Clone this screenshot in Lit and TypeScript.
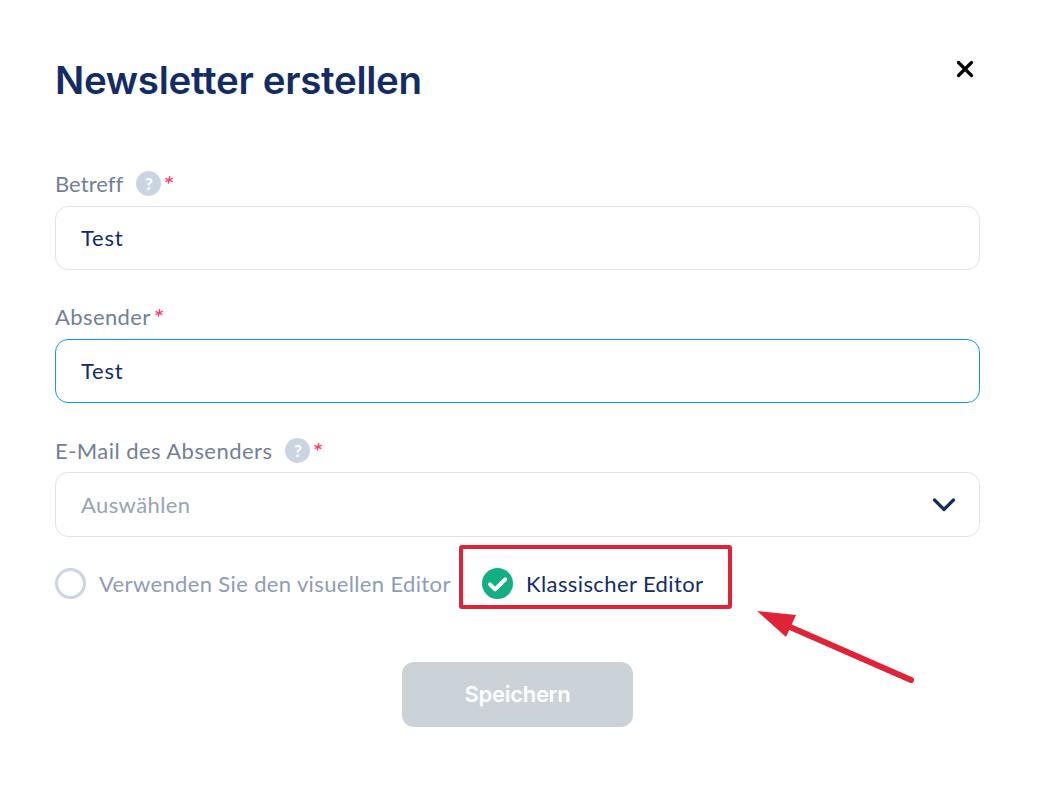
import { LitElement, html, css, nothing } from 'lit';
import { customElement, property, state } from 'lit/decorators.js';
import { classMap } from 'lit/directives/class-map.js';

@customElement('app-field-label')
export class FieldLabel extends LitElement {
  @property({ type: String }) text = '';
  @property({ type: Boolean }) help = false;

  static styles = css`
    :host {
      display: flex;
      height: 26px;
      color: #718096;
      font-size: 22px;
      line-height: 26px;
      letter-spacing: 0.4px;
    }

    .help {
      width: 25px;
      height: 25px;
      margin-left: 13px;
      border-radius: 50%;
      background: #cbd5e1;
      color: #fff;
      font-size: 17px;
      font-weight: 900;
      line-height: 25px;
      letter-spacing: 0;
      text-align: center;
    }

    .required {
      width: 8px;
      height: 8px;
      margin: 5px 0 0 4px;
      fill: none;
      stroke: #ff4069;
      stroke-width: 1.4;
    }
  `;

  render() {
    return html`
      <span>${this.text}</span>
      ${this.help ? html`<span class="help">?</span>` : nothing}
      <svg class="required" viewBox="0 0 8 8">
        <path d="M4.7 0.2L3.3 7.6M0.4 2.4L7.5 5.6M7.7 2.1L0.6 5.7" />
      </svg>
    `;
  }
}

@customElement('app-root')
export class NewsletterDialog extends LitElement {
  @state() private editor = 'classic';

  static styles = css`
    :host {
      display: block;
      box-sizing: border-box;
      height: 789px;
      padding: 55px 57px 0 55px;
      overflow: hidden;
      background: #fff;
      color: #132c66;
      font-family: Lato, sans-serif;
      font-size: 22px;
    }

    .header {
      display: flex;
      justify-content: space-between;
      height: 116px;
    }

    .title {
      margin: 0;
      font-family: Inter, sans-serif;
      font-size: 38.5px;
      font-weight: 600;
      line-height: 50px;
      letter-spacing: -0.3px;
      white-space: nowrap;
    }

    .close {
      width: 18px;
      height: 18px;
      margin: 4.5px 6px 0 0;
      fill: none;
      stroke: #000;
      stroke-width: 3.2;
      stroke-linecap: round;
    }

    .field {
      box-sizing: border-box;
      height: 133px;
    }

    .field.subject app-field-label {
      letter-spacing: 0.05px;
    }

    .field.email {
      padding-top: 1px;
    }

    .field.email app-field-label {
      letter-spacing: 0.45px;
    }

    .control {
      display: flex;
      box-sizing: border-box;
      align-items: center;
      justify-content: space-between;
      height: 64px;
      margin-top: 9px;
      padding: 0 24px 2px 25px;
      border: 1px solid #e2e3e5;
      border-radius: 13px;
      letter-spacing: 0.8px;
    }

    .control.focused {
      border-color: #0c9ced;
    }

    .control.select {
      height: 65px;
      margin-top: 8px;
      padding: 0 23px 0 25px;
      color: #97a3b4;
      letter-spacing: 0.4px;
    }

    .chevron {
      width: 24px;
      height: 16px;
      fill: none;
      stroke: #132c66;
      stroke-width: 3.2;
      stroke-linecap: round;
      stroke-linejoin: round;
    }

    .options {
      display: flex;
      height: 91px;
      margin-top: -23px;
    }

    .option {
      display: flex;
      align-items: center;
      height: 31px;
      margin-top: 21px;
      color: #8d9cb8;
      white-space: nowrap;
      letter-spacing: 0.36px;
    }

    .option.visual {
      width: 404px;
    }

    .option.selected {
      color: #132c66;
      letter-spacing: 0.4px;
    }

    .mark {
      width: 31px;
      height: 31px;
      margin: 0 13px 0 0;
      flex: none;
      fill: none;
    }

    .callout {
      box-sizing: border-box;
      width: 273px;
      height: 64px;
      margin-top: -2px;
      padding: 0 0 0 19px;
      border: 4px solid #e02337;
      border-radius: 3px;
    }

    .callout .option {
      margin-top: 19px;
    }

    .arrow {
      width: 158px;
      height: 74px;
      margin: 63px 0 0 24px;
      flex: none;
    }

    .save {
      display: block;
      width: 231px;
      height: 65px;
      margin: 24px 0 0 347px;
      padding: 0 0 2px;
      border: 0;
      border-radius: 12px;
      background: #cbd3d9;
      color: #fff;
      font-family: Inter, sans-serif;
      font-size: 22px;
      font-weight: 600;
      letter-spacing: -0.3px;
    }
  `;

  private renderOption(id: string, label: string) {
    const selected = this.editor === id;
    return html`
      <div
        class=${classMap({ option: true, visual: id === 'visual', selected })}
        @click=${() => (this.editor = id)}
      >
        ${selected
          ? html`<svg class="mark" viewBox="0 0 31 31">
              <circle cx="15.5" cy="15.5" r="15.5" fill="#14ae85" />
              <path
                d="M8 16.4L13 21.4L23.2 11.3"
                stroke="#fff"
                stroke-width="4"
                stroke-linecap="round"
                stroke-linejoin="round"
              />
            </svg>`
          : html`<svg class="mark" viewBox="0 0 31 31">
              <circle cx="15.5" cy="15.5" r="14" stroke="#cbd5e3" stroke-width="3" />
            </svg>`}
        <span>${label}</span>
      </div>
    `;
  }

  render() {
    return html`
      <div class="header">
        <h1 class="title">Newsletter erstellen</h1>
        <svg class="close" viewBox="0 0 18 18">
          <path d="M2.5 2.5L15.5 15.5M15.5 2.5L2.5 15.5" />
        </svg>
      </div>

      <div class="field subject">
        <app-field-label text="Betreff" help></app-field-label>
        <div class="control">Test</div>
      </div>
      <div class="field">
        <app-field-label text="Absender"></app-field-label>
        <div class="control focused">Test</div>
      </div>
      <div class="field email">
        <app-field-label text="E-Mail des Absenders" help></app-field-label>
        <div class="control select">
          <span>Auswählen</span>
          <svg class="chevron" viewBox="0 0 24 16">
            <path d="M2.5 3L12 12.5L21.5 3" />
          </svg>
        </div>
      </div>

      <div class="options">
        ${this.renderOption('visual', 'Verwenden Sie den visuellen Editor')}
        <div class="callout">${this.renderOption('classic', 'Klassischer Editor')}</div>
        <svg class="arrow" viewBox="0 0 158 74">
          <path d="M1 1L40 5L30 27Z" fill="#e02337" />
          <path d="M34 17L155 70" stroke="#e02337" stroke-width="6" stroke-linecap="round" />
        </svg>
      </div>

      <button class="save">Speichern</button>
    `;
  }
}

declare global {
  interface HTMLElementTagNameMap {
    'app-field-label': FieldLabel;
    'app-root': NewsletterDialog;
  }
}
